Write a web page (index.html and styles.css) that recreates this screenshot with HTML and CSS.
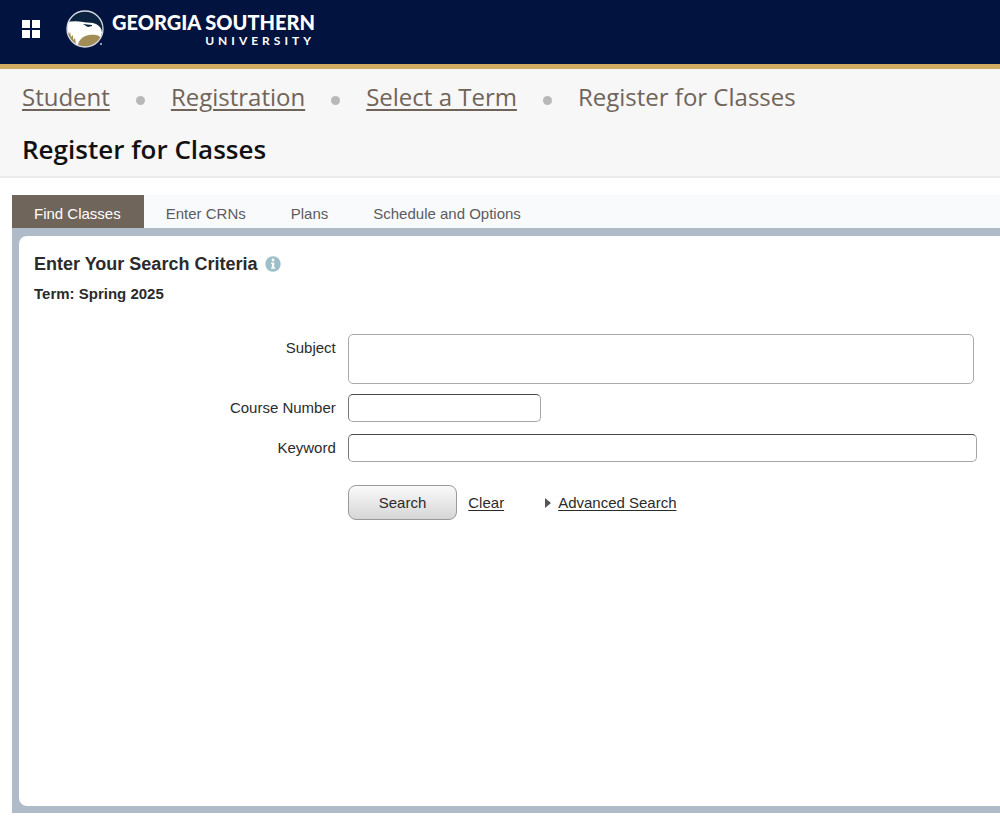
FILE: index.html
```
<!DOCTYPE html>
<html lang="en">

<head>
    <meta charset="UTF-8">
    <meta name="viewport" content="width=device-width, initial-scale=1.0">
    <title>Register for Classes</title>
    <link rel="stylesheet" href="styles.css">
</head>

<body>
    <header class="topbar">
        <button class="menu-btn" type="button" aria-label="Menu">
            <svg width="18" height="18" viewBox="0 0 18 18" fill="#fff">
                <rect x="0" y="0" width="8" height="8" />
                <rect x="10" y="0" width="8" height="8" />
                <rect x="0" y="10" width="8" height="8" />
                <rect x="10" y="10" width="8" height="8" />
            </svg>
        </button>
        <a class="logo" href="#" aria-label="Georgia Southern University">
            <svg width="38" height="38" viewBox="0 0 38 38">
                <defs>
                    <clipPath id="badge">
                        <circle cx="19" cy="19" r="18" />
                    </clipPath>
                </defs>
                <circle cx="19" cy="19" r="18" fill="#0c2340" />
                <g clip-path="url(#badge)">
                    <path d="M0 12 C6 11 12 11 17 12 C21 13 26 12 30 14 C34 16 36 19 36 23 L34 29 C33 32 30 30 28 34 L12 38 L0 38 Z" fill="#fff" />
                    <path d="M12 36 C12 30 17 26 23 25 C29 24 34 25 34 28 C33 34 26 38 19 38 Z" fill="#a28d56" />
                    <path d="M17 14 L26 15 L26 16 L22 17 L20 16 Z" fill="#0c2340" />
                    <path d="M1 19 L3 24 L4 22 L5 27 L7 25 L7 30 L9 28 L10 34 L6 32 L2 27 Z" fill="#a28d56" />
                </g>
                <circle cx="19" cy="19" r="18" fill="none" stroke="#d5d9e0" stroke-width="1.3" />
                <circle cx="35" cy="34" r="1" fill="#c5cad6" />
            </svg>
            <span class="logo-text">
                <span class="logo-name">GEORGIA SOUTHERN</span>
                <span class="logo-sub">UNIVERSITY</span>
            </span>
        </a>
    </header>

    <div class="page-head">
        <nav class="breadcrumb" aria-label="Breadcrumb">
            <a href="#">Student</a>
            <span class="dot"></span>
            <a href="#">Registration</a>
            <span class="dot"></span>
            <a href="#">Select a Term</a>
            <span class="dot"></span>
            <span>Register for Classes</span>
        </nav>
        <h1>Register for Classes</h1>
    </div>

    <main class="content">
        <nav class="tabs">
            <a class="tab active" href="#">Find Classes</a>
            <a class="tab" href="#">Enter CRNs</a>
            <a class="tab" href="#">Plans</a>
            <a class="tab" href="#">Schedule and Options</a>
        </nav>
        <div class="panel">
            <section class="panel-body">
                <div class="panel-title">
                    <h2>Enter Your Search Criteria</h2>
                    <button class="info-btn" type="button" aria-label="Information">
                        <svg width="16" height="16" viewBox="0 0 16 16">
                            <circle cx="8" cy="8" r="7.7" fill="#9cbfca" />
                            <circle cx="8" cy="4" r="1.4" fill="#fff" />
                            <path d="M6 6.5 H9.2 V11.5 H10.2 V12.7 H5.9 V11.5 H6.9 V7.7 H6 Z" fill="#fff" />
                        </svg>
                    </button>
                </div>
                <p class="term">Term: Spring 2025</p>
                <form class="search-form">
                    <label for="subject">Subject</label>
                    <textarea id="subject" class="field subject"></textarea>
                    <label for="course">Course Number</label>
                    <input id="course" class="field course" type="text">
                    <label for="keyword">Keyword</label>
                    <input id="keyword" class="field" type="text">
                    <div class="actions">
                        <button class="search-btn" type="button">Search</button>
                        <a href="#">Clear</a>
                        <a class="advanced" href="#">
                            <svg width="6" height="10" viewBox="0 0 6 10"><path d="M0 0 L6 5 L0 10 Z" fill="#555" /></svg>
                            <span>Advanced Search</span>
                        </a>
                    </div>
                </form>
            </section>
        </div>
    </main>
</body>

</html>
```

FILE: styles.css
```
* {
    box-sizing: border-box;
}

body {
    margin: 0;
    min-height: 100vh;
    display: flex;
    flex-direction: column;
    background-color: #fff;
    color: #2b2b2b;
    font-family: "Liberation Sans", Arial, sans-serif;
    font-size: 15px;
}

h1,
h2,
p {
    margin: 0;
}

button {
    font-family: inherit;
    cursor: pointer;
}

svg {
    display: block;
}

/* top bar */
.topbar {
    display: flex;
    align-items: center;
    gap: 26px;
    padding: 9px 22px 15px;
    background-color: #031340;
    border-bottom: 5px solid #d3aa62;
}

.menu-btn,
.info-btn {
    padding: 0;
    border: 0;
    background: none;
}

.logo {
    display: flex;
    align-items: center;
    gap: 8px;
    height: 40px;
    color: #fff;
    font-family: Lato, sans-serif;
    text-decoration: none;
}

.logo-text {
    display: flex;
    flex-direction: column;
    align-items: flex-end;
}

.logo-name {
    font-size: 20px;
    font-weight: 900;
    line-height: 24px;
}

.logo-sub {
    font-size: 12px;
    font-weight: 700;
    line-height: 14px;
    letter-spacing: 4px;
}

/* page heading */
.page-head {
    padding: 10px 22px 9px;
    background-color: #f7f7f7;
    border-bottom: 2px solid #ebebeb;
    font-family: "Open Sans", sans-serif;
}

.breadcrumb {
    display: flex;
    align-items: center;
    gap: 26px;
    font-size: 24px;
    line-height: 36px;
    color: #70645a;
}

.breadcrumb a {
    color: inherit;
    text-underline-offset: 3px;
}

.dot {
    width: 9px;
    height: 9px;
    margin-top: 6px;
    border-radius: 50%;
    background-color: #b8b8b8;
}

h1 {
    margin-top: 16px;
    font-size: 26px;
    font-weight: 600;
    line-height: 36px;
    color: #111;
}

/* tabs and panel */
.content {
    flex: 1;
    display: flex;
    flex-direction: column;
    padding: 17px 0 8px 12px;
}

.tabs {
    display: flex;
    background-color: #f9fafc;
}

.tab {
    padding: 8px 23px 3px 22px;
    line-height: 22px;
    color: #5b5b60;
    text-decoration: none;
}

.tab.active {
    background-color: #70655a;
    color: #fff;
}

.panel {
    flex: 1;
    display: flex;
    padding: 8px 0 7px 7px;
    background-color: #afbbc8;
}

.panel-body {
    flex: 1;
    padding: 16px 23px 16px 15px;
    border-radius: 8px 0 0 8px;
    background-color: #fff;
}

.panel-title {
    display: flex;
    align-items: center;
    gap: 8px;
}

h2 {
    font-size: 18px;
    line-height: 24px;
}

.term {
    margin-top: 6px;
    font-weight: bold;
    line-height: 24px;
}

/* search form */
.search-form {
    display: grid;
    grid-template-columns: 32% 1fr;
    column-gap: 12px;
    margin-top: 28px;
}

.search-form label {
    line-height: 28px;
    text-align: right;
}

.field {
    width: 100%;
    height: 28px;
    margin-bottom: 12px;
    padding: 4px 8px;
    border: 1px solid #a5a5a5;
    border-top-color: #4a4a4a;
    border-left-color: #777;
    border-radius: 5px;
    background-color: #fff;
    font: inherit;
}

.subject {
    width: calc(100% - 3px);
    height: 50px;
    margin-bottom: 10px;
    border-color: #aaaaae;
    resize: none;
}

.course {
    width: 193px;
}

.actions {
    grid-column: 2;
    display: flex;
    align-items: center;
    margin-top: 11px;
}

.actions a {
    color: #2b2b2b;
    text-underline-offset: 2px;
}

.search-btn {
    height: 35px;
    margin-right: 11px;
    padding: 0 30px;
    border: 1px solid #999;
    border-radius: 8px;
    background: linear-gradient(#fafafa, #d6d6d6);
    color: #2b2b2b;
    font-size: 15px;
}

.advanced {
    display: flex;
    align-items: center;
    gap: 7px;
    margin-left: 41px;
}
```
